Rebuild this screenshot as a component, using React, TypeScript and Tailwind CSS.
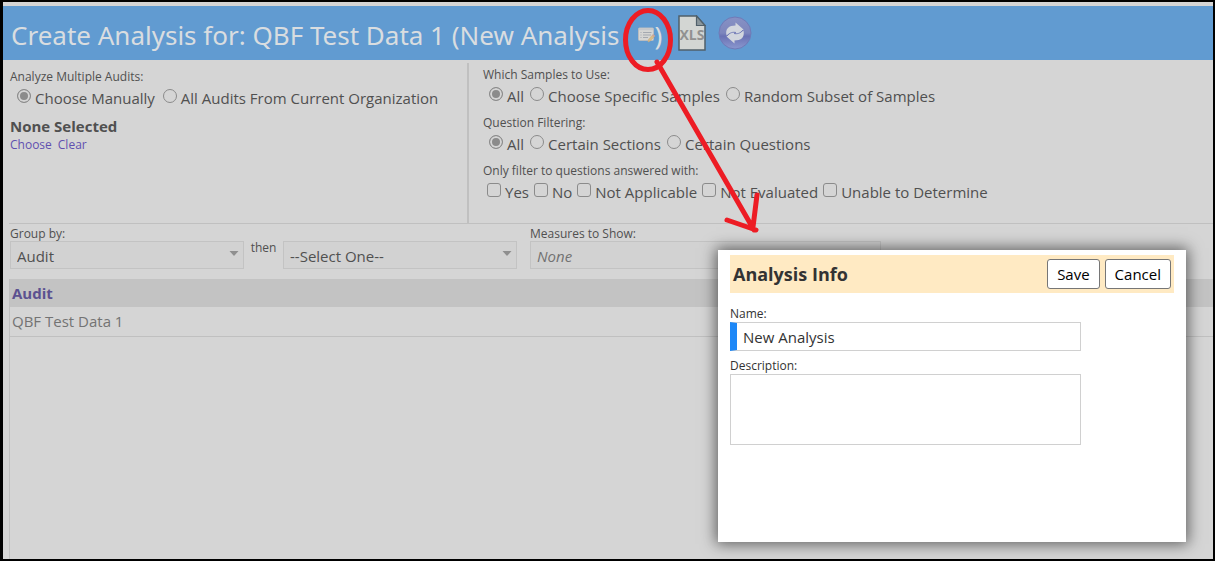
import React from "react";

type ChoiceProps = {
  type: "radio" | "checkbox";
  name: string;
  label: string;
  checked?: boolean;
};

function Choice({ type, name, label, checked }: ChoiceProps) {
  const shape =
    type === "radio"
      ? "rounded-full checked:bg-[#8b8b8b] checked:shadow-[inset_0_0_0_2px_#d5d5d5]"
      : "rounded-[3px] checked:bg-[#8b8b8b]";
  return (
    <label className="flex gap-1 text-[15px] leading-6 whitespace-nowrap">
      <input
        type={type}
        name={name}
        defaultChecked={checked}
        className={`mt-[3px] size-3.5 shrink-0 appearance-none border border-[#8b8b8b] ${shape}`}
      />
      {label}
    </label>
  );
}

type FilterProps = { title: string; className: string; children: React.ReactNode };

function Filter({ title, className, children }: FilterProps) {
  return (
    <fieldset className="mb-1.5">
      <legend className="text-xs leading-[18px]">{title}</legend>
      <div className={`flex ${className}`}>{children}</div>
    </fieldset>
  );
}

type PickerProps = { id: string; label: string; options: string[]; className: string };

function Picker({ id, label, options, className }: PickerProps) {
  return (
    <div className={className}>
      <label htmlFor={id} className="block h-4 text-xs leading-[18px]">
        {label}
      </label>
      <div className="relative">
        <select
          id={id}
          aria-label={label ? undefined : "Then group by"}
          className="block h-7 w-full appearance-none border border-[#c3c3c3] bg-[#d2d2d2] px-1.5 pt-0.5 text-[15px] leading-6"
        >
          {options.map((o) => (
            <option key={o}>{o}</option>
          ))}
        </select>
        <svg viewBox="0 0 10 6" className="pointer-events-none absolute top-2.5 right-[5px] h-1.5 w-2.5">
          <path d="M0.500 0h9L5 5z" fill="#8f8f8f" />
        </svg>
      </div>
    </div>
  );
}

function NoteIcon() {
  return (
    <svg viewBox="0 0 17 16" className="h-4 w-[17px]">
      <rect x="0.5" y="1" width="15" height="12.5" rx="1" fill="#d6d6d3" stroke="#b9bcc0" />
      <path d="M1 2.5h14" stroke="#c4c8cc" strokeWidth="1.5" />
      <path d="M2.5 5.5h1M5 5.5h8.5M2.5 8h1M5 8h8M2.5 10.5h1M5 10.5h5" stroke="#a4a9b0" />
      <path d="M10 15l.5-2.500 4.500-5 1.800 1.500-4.500 5z" fill="#d8bd86" stroke="#c9a77b" strokeWidth="0.5" />
      <path d="M14 8.500l1-1.200 2 1.500-1 1.200z" fill="#c7a3a0" />
    </svg>
  );
}

function XlsIcon() {
  return (
    <svg viewBox="0 0 28 36" className="h-9 w-7">
      <path d="M1 1h17.500l8.500 9.500V35H1z" fill="#d3d6d3" stroke="#50606a" strokeWidth="1.500" />
      <path d="M18.500 1l8.500 9.500h-8.500z" fill="#8a969b" stroke="#50606a" strokeWidth="1.200" />
      <text
        x="14"
        y="25"
        textAnchor="middle"
        fontFamily="Open Sans, sans-serif"
        fontWeight="700"
        fontSize="14"
        fill="#919191"
      >
        XLS
      </text>
    </svg>
  );
}

function RefreshIcon() {
  return (
    <svg viewBox="0 0 34 34" className="size-[34px]">
      <defs>
        <linearGradient id="orb" x1="0" y1="0" x2="0" y2="1">
          <stop offset="0" stopColor="#8791c4" />
          <stop offset="0.500" stopColor="#7d86bd" />
          <stop offset="0.600" stopColor="#6a72b4" />
          <stop offset="1" stopColor="#8b98cf" />
        </linearGradient>
      </defs>
      <circle cx="17" cy="17" r="16" fill="url(#orb)" stroke="#6f7ab8" />
      <g fill="#d2d6de">
        <path d="M8.500 19.500C7 12.500 11 9.500 17.500 9.500V6.500l8 7-7.500 6.500v-3.500c-4.500-.5-7 .5-9.500 3z" />
        <path d="M25.500 14.500c1.500 7-2.500 10-9 10v3l-8-7 7.500-6.500v3.500c4.500.5 7-.5 9.500-3z" />
      </g>
      <path d="M9 20c3-4 6.500-4 9-3.500M25 14c-3 4-6.500 4-9 3.500" fill="none" stroke="#6a72b4" strokeWidth="0.800" />
    </svg>
  );
}

function AnalysisDialog() {
  return (
    <div
      role="dialog"
      aria-labelledby="dialog-title"
      className="absolute top-[248px] right-[27px] h-[292px] w-[468px] bg-white px-3 pt-[5px] text-[#333] shadow-[0_0_14px_2px_#00000090]"
    >
      <div className="flex h-[38px] items-center gap-[5px] bg-[#ffeac3] px-[3px]">
        <h2 id="dialog-title" className="grow text-lg font-bold">
          Analysis Info
        </h2>
        <button className="h-[30px] rounded-[3px] border border-[#767676] bg-white px-[9px] text-[15px] text-black">
          Save
        </button>
        <button className="h-[30px] rounded-[3px] border border-[#767676] bg-white px-[9px] text-[15px] text-black">
          Cancel
        </button>
      </div>
      <label htmlFor="name" className="mt-3 block text-xs leading-[17px]">
        Name:
      </label>
      <input
        id="name"
        defaultValue="New Analysis"
        className="block h-[29px] w-[351px] border border-l-[7px] border-[#d0d0d0] border-l-[#1e88f7] px-1.5 text-[15px]"
      />
      <label htmlFor="description" className="mt-1.5 block text-xs leading-[17px]">
        Description:
      </label>
      <textarea id="description" className="block h-[71px] w-[351px] resize-none border border-[#d0d0d0] p-1.5 text-[15px]" />
    </div>
  );
}

export default function App() {
  return (
    <div className="relative flex min-h-screen flex-col border-2 border-l-[3px] border-black bg-[#d5d5d5] pt-1 font-['Open_Sans',sans-serif] text-[#505050]">
      <header className="flex h-[54px] shrink-0 items-center bg-[#619bd1] pl-2 text-[#d9dde0]">
        <h1 className="flex items-center pt-1 font-['Noto_Sans',sans-serif] text-[26px] whitespace-nowrap">
          Create Analysis for: QBF Test Data 1 (New Analysis
          <button aria-label="Edit analysis info" className="ml-[18px]">
            <NoteIcon />
          </button>
          )
        </h1>
        <button aria-label="Export to XLS" className="ml-4">
          <XlsIcon />
        </button>
        <button aria-label="Refresh" className="ml-3">
          <RefreshIcon />
        </button>
      </header>

      <section className="ml-1.5 flex border-b border-[#c0c0c0] pt-[3px]">
        <div className="w-[458px] shrink-0 pt-[5px] pl-px">
          <Filter title="Analyze Multiple Audits:" className="gap-2 pl-[7px]">
            <Choice type="radio" name="audits" label="Choose Manually" checked />
            <Choice type="radio" name="audits" label="All Audits From Current Organization" />
          </Filter>
          <p className="text-[15px] leading-5 font-bold">None Selected</p>
          <div className="flex gap-1.5 text-xs leading-[18px] text-[#6150b0]">
            <a href="#choose">Choose</a>
            <a href="#clear">Clear</a>
          </div>
        </div>
        <div className="grow border-l-2 border-[#c0c0c0] pt-[3px] pb-[13px] pl-3.5">
          <Filter title="Which Samples to Use:" className="gap-1.5 pl-1.5">
            <Choice type="radio" name="samples" label="All" checked />
            <Choice type="radio" name="samples" label="Choose Specific Samples" />
            <Choice type="radio" name="samples" label="Random Subset of Samples" />
          </Filter>
          <Filter title="Question Filtering:" className="gap-1.5 pl-1.5">
            <Choice type="radio" name="questions" label="All" checked />
            <Choice type="radio" name="questions" label="Certain Sections" />
            <Choice type="radio" name="questions" label="Certain Questions" />
          </Filter>
          <Filter title="Only filter to questions answered with:" className="gap-[5px] pl-1">
            <Choice type="checkbox" name="answers" label="Yes" />
            <Choice type="checkbox" name="answers" label="No" />
            <Choice type="checkbox" name="answers" label="Not Applicable" />
            <Choice type="checkbox" name="answers" label="Not Evaluated" />
            <Choice type="checkbox" name="answers" label="Unable to Determine" />
          </Filter>
        </div>
      </section>

      <section className="ml-[7px] flex pt-px">
        <Picker id="group" label="Group by:" options={["Audit"]} className="w-[234px]" />
        <span className="w-[39px] pt-3.5 text-center text-xs leading-[18px]">then</span>
        <Picker id="then" label="" options={["--Select One--"]} className="w-[234px]" />
        <Picker
          id="measures"
          label="Measures to Show:"
          options={["None"]}
          className="ml-[13px] w-[351px] [&_select]:text-[#737373] [&_select]:italic"
        />
      </section>

      <div className="mt-2.5 ml-1.5 grow border-l border-[#c0c0c0]">
        <table className="w-full text-left text-[15px]">
          <thead>
            <tr className="h-7 bg-[#c3c3c3] text-[#5c5190]">
              <th className="px-0.5 py-0 font-bold">Audit</th>
            </tr>
          </thead>
          <tbody>
            <tr className="border-b border-[#c0c0c0] text-[#737373]">
              <td className="px-0.5 pt-0.5 pb-[3px] leading-6">QBF Test Data 1</td>
            </tr>
          </tbody>
        </table>
      </div>

      <AnalysisDialog />

      <svg
        viewBox="0 0 140 230"
        aria-hidden="true"
        className="pointer-events-none absolute top-1 left-[617px] h-[230px] w-[140px]"
        fill="none"
        stroke="#ed1c24"
        strokeWidth="5"
        strokeLinecap="round"
        strokeLinejoin="round"
      >
        <ellipse cx="28" cy="34" rx="22.500" ry="29.500" />
        <path d="M37 56L134 224M107 214l29 10M137 189l-4 32" />
      </svg>
    </div>
  );
}
